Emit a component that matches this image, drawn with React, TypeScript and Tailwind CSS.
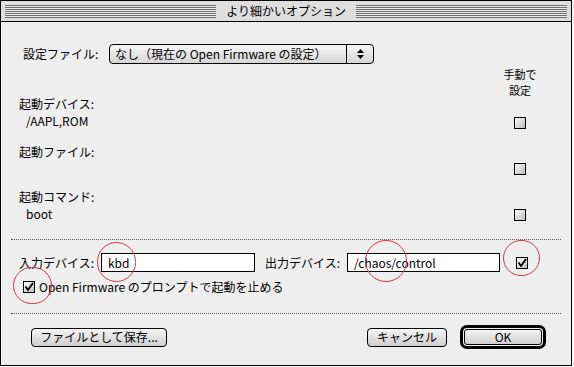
import React from 'react';

const Check = ({ checked }: { checked?: boolean }) => (
  <span className="w-[12px] h-[12px] border border-black bg-gradient-to-br from-[#fbfbfb] to-[#bdbdbd] flex items-center justify-center">
    {checked && (
      <svg width="10" height="10" viewBox="0 0 10 10">
        <path d="M1.5 4.5 L4 8 L9 1" fill="none" stroke="#000" strokeWidth="1.8" />
      </svg>
    )}
  </span>
);

const Circle = ({ className }: { className: string }) => (
  <span className={`absolute rounded-full border border-[#d0384a] pointer-events-none ${className}`} />
);

const Btn = ({ children, className }: { children: React.ReactNode; className: string }) => (
  <div className={`h-[19px] rounded-[4px] border border-black bg-gradient-to-b from-[#f4f4f4] to-[#cfcfcf] flex items-center justify-center leading-none ${className}`}>
    {children}
  </div>
);

const App = () => {
  return (
    <div className="w-[574px] h-[367px] bg-[#f8f8f8] relative text-[12px] text-black [font-family:'Noto_Sans_CJK_JP','Noto_Sans',sans-serif]">
      <div className="w-[572px] h-[366px] border border-black bg-[#eeeeee] shadow-[inset_1px_1px_0_#ffffff] flex flex-col">
        {/* Title bar */}
        <div className="h-[21px] border-b border-black bg-[#dedede] flex items-center px-[4px] gap-[6px]">
          <div className="flex-1 h-[13px] bg-[repeating-linear-gradient(to_bottom,#6f6f6f_0px,#6f6f6f_1px,#eaeaea_1px,#eaeaea_2px)]" />
          <span className="px-[4px] leading-none">より細かいオプション</span>
          <div className="flex-1 h-[13px] bg-[repeating-linear-gradient(to_bottom,#6f6f6f_0px,#6f6f6f_1px,#eaeaea_1px,#eaeaea_2px)]" />
        </div>

        {/* Config file */}
        <div className="mt-[22px] pl-[22px] flex items-center">
          <span className="w-[86px]">設定ファイル:</span>
          <div className="w-[265px] h-[20px] rounded-[4px] border border-black bg-gradient-to-b from-[#f6f6f6] to-[#d6d6d6] flex items-stretch">
            <span className="flex-1 pl-[5px] flex items-center leading-none">なし（現在の Open Firmware の設定）</span>
            <span className="w-[27px] border-l border-black flex items-center justify-center">
              <svg width="9" height="12" viewBox="0 0 9 12">
                <path d="M4.5 1 L8 5 L1 5 Z M1 7 L8 7 L4.5 11 Z" fill="#000" />
              </svg>
            </span>
          </div>
        </div>

        {/* Manual column header */}
        <div className="mt-[2px] h-[31px] flex justify-end pr-[31px]">
          <div className="w-[40px] flex flex-col items-center text-[11px] leading-[16px]">
            <span>手動で</span>
            <span>設定</span>
          </div>
        </div>

        {/* Boot device */}
        <div className="flex pl-[18px] pr-[31px]">
          <div className="flex-1 leading-[14px]">
            <div>起動デバイス:</div>
            <div className="mt-[3px] pl-[7px]">/AAPL,ROM</div>
          </div>
          <div className="w-[40px] flex justify-center pt-[20px]"><Check /></div>
        </div>

        {/* Boot file */}
        <div className="mt-[16px] flex pl-[18px] pr-[31px]">
          <div className="flex-1 leading-[14px]">
            <div>起動ファイル:</div>
            <div className="mt-[3px] pl-[7px] h-[14px]" />
          </div>
          <div className="w-[40px] flex justify-center pt-[18px]"><Check /></div>
        </div>

        {/* Boot command */}
        <div className="mt-[14px] flex pl-[18px] pr-[31px]">
          <div className="flex-1 leading-[14px]">
            <div>起動コマンド:</div>
            <div className="mt-[3px] pl-[7px]">boot</div>
          </div>
          <div className="w-[40px] flex justify-center pt-[19px]"><Check /></div>
        </div>

        <div className="mt-[18px] mx-[10px] border-t border-dotted border-[#555]" />

        {/* Input / output devices */}
        <div className="mt-[13px] pl-[18px] flex items-center">
          <span className="w-[82px]">入力デバイス:</span>
          <div className="w-[154px] h-[19px] border border-black bg-white flex items-center pl-[6px] leading-none">kbd</div>
          <span className="ml-[10px] w-[82px]">出力デバイス:</span>
          <div className="w-[153px] h-[19px] border border-black bg-white flex items-center pl-[6px] leading-none">/chaos/control</div>
          <div className="ml-[16px]"><Check checked /></div>
        </div>

        <div className="mt-[9px] pl-[22px] flex items-center gap-[4px]">
          <Check checked />
          <span className="leading-none">Open Firmware のプロンプトで起動を止める</span>
        </div>

        <div className="mt-[20px] mx-[10px] border-t border-dotted border-[#555]" />

        {/* Buttons */}
        <div className="mt-[11px] pl-[30px] pr-[25px] flex items-center">
          <Btn className="w-[136px]">ファイルとして保存...</Btn>
          <div className="flex-1" />
          <Btn className="w-[80px]">キャンセル</Btn>
          <div className="ml-[13px] w-[86px] h-[24px] rounded-[7px] border-[3px] border-black p-[1px] flex">
            <div className="flex-1 rounded-[3px] border border-black bg-gradient-to-b from-[#f4f4f4] to-[#cfcfcf] flex items-center justify-center leading-none">OK</div>
          </div>
        </div>
      </div>

      <Circle className="left-[97px] top-[242px] w-[39px] h-[40px]" />
      <Circle className="left-[365px] top-[240px] w-[42px] h-[42px]" />
      <Circle className="left-[503px] top-[240px] w-[37px] h-[36px]" />
      <Circle className="left-[13px] top-[267px] w-[39px] h-[37px]" />
    </div>
  );
};

export default App;
